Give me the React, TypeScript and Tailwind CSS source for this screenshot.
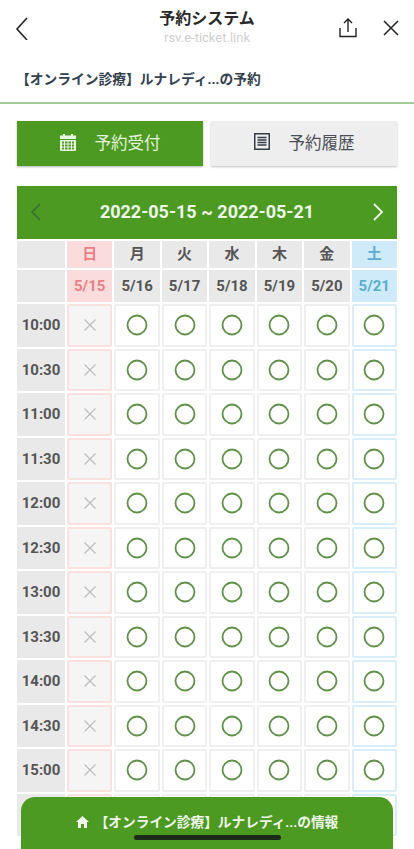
const FONT = "font-['Roboto','Noto_Sans_CJK_JP',sans-serif]";
const days = [
  { d: "日", n: "5/15", kind: "sun" },
  { d: "月", n: "5/16", kind: "" },
  { d: "火", n: "5/17", kind: "" },
  { d: "水", n: "5/18", kind: "" },
  { d: "木", n: "5/19", kind: "" },
  { d: "金", n: "5/20", kind: "" },
  { d: "土", n: "5/21", kind: "sat" },
];
const times = ["10:00","10:30","11:00","11:30","12:00","12:30","13:00","13:30","14:00","14:30","15:00","15:30"];

function Head({ text, kind, h, size }: { text: string; kind: string; h: string; size: string }) {
  const c = kind === "sun" ? "bg-[#fbdcdc] text-[#ea7f86]" : kind === "sat" ? "bg-[#cfeaf8] text-[#5aadd0]" : "bg-[#e9e9e9] text-[#555555]";
  return <div className={`flex items-center justify-center font-bold ${h} ${size} ${c}`}>{text}</div>;
}

function Cell({ kind }: { kind: string }) {
  if (kind === "sun") {
    return (
      <div className="flex h-[42.5px] items-center justify-center rounded-[2px] border-2 border-[#fbe0e0] bg-[#f5f5f5]">
        <svg width="14" height="14" viewBox="0 0 14 14" fill="none" stroke="#bcbcbc" strokeWidth="1.2"><path d="M1.500 1.500 12.500 12.500M12.500 1.500 1.500 12.500" /></svg>
      </div>
    );
  }
  const b = kind === "sat" ? "border-[#d9eef9]" : "border-[#efefef]";
  return (
    <div className={`flex h-[42.5px] items-center justify-center rounded-[2px] border-2 bg-white ${b}`}>
      <svg width="22" height="22" viewBox="0 0 22 22" fill="none" stroke="#5f9149" strokeWidth="1.800"><circle cx="11" cy="11" r="9.500" /></svg>
    </div>
  );
}

export default function App() {
  return (
    <div className={`relative h-[849px] w-[414px] overflow-hidden bg-white ${FONT}`}>
      <header className="relative flex h-[56px] items-start justify-between pl-[14px] pr-[15px] pt-[15px]">
        <svg width="16" height="24" viewBox="0 0 16 24" fill="none" stroke="#222" strokeWidth="1.6" className="mt-[1px]"><path d="M13 2 3 13l10 11" /></svg>
        <div className="absolute left-0 right-0 top-[9px] text-center leading-none">
          <div className="text-[16px] font-semibold leading-[20px] text-[#2a2a2a]">予約システム</div>
          <div className="mt-[2px] text-[13px] leading-[14px] text-[#cfcfcf]">rsv.e-ticket.link</div>
        </div>
        <div className="flex items-center gap-[26px] pt-[3px]">
          <svg width="18" height="20" viewBox="0 0 18 20" fill="none" stroke="#222" strokeWidth="1.4"><path d="M1 10v8.500h16V10M9 14V1.500M5 5l4-4 4 4" /></svg>
          <svg width="16" height="16" viewBox="0 0 16 16" fill="none" stroke="#222" strokeWidth="1.5"><path d="M1 1 15 15M15 1 1 15" /></svg>
        </div>
      </header>

      <div className="flex h-[48px] items-center border-b-2 border-[#a3cd96] pl-[16px] pt-[1px] text-[13.75px] font-bold text-[#33414f]">
        【オンライン診療】ルナレディ...の予約
      </div>

      <div className="mt-[17px] flex gap-[8px] px-[17px]">
        <div className="flex h-[45px] w-[186px] items-center justify-center gap-[19px] bg-[#4c9a22] text-[16.500px] text-[#e4f1dc] shadow-[0_1px_2px_rgba(0,0,0,0.3)]">
          <svg width="16" height="17" viewBox="0 0 16 17" fill="#e8f3e2" className="mb-[3px]"><path d="M0 1.500h16V5H0zM3 0h2v2H3zM11 0h2v2h-2z" /><path fillRule="evenodd" d="M0 6h16v10a1 1 0 0 1-1 1H1a1 1 0 0 1-1-1zm2 1.500v2h2v-2zm3 0v2h2.500v-2zm3.500 0v2H11v-2zm3.500 0v2h2v-2zM2 10.500v2h2v-2zm3 0v2h2.500v-2zm3.500 0v2H11v-2zm3.500 0v2h2v-2zM2 13.500v2h2v-2zm3 0v2h2.500v-2zm3.500 0v2H11v-2zm3.500 0v2h2v-2z" /></svg>
          <span className="pt-[2px]">予約受付</span>
        </div>
        <div className="flex h-[45px] w-[186px] items-center justify-center gap-[19px] bg-[#eeeeee] text-[16.500px] text-[#4a4f55] shadow-[0_1px_2px_rgba(0,0,0,0.25)]">
          <svg width="16" height="17" viewBox="0 0 16 17" fill="none" stroke="#343c47" className="mb-[4px]"><rect x="0.75" y="0.75" width="14.500" height="15.500" strokeWidth="1.5" /><path d="M3.500 4.500h9M3.500 7h9M3.500 9.500h9M3.500 12h9" strokeWidth="1.400" /></svg>
          <span className="pt-[2px]">予約履歴</span>
        </div>
      </div>

      <div className="mx-[17px] mt-[20px]">
        <div className="relative flex h-[53px] items-center justify-between pb-[2px] bg-[#4c9a22] pl-[13px] pr-[13px]">
          <svg width="12" height="18" viewBox="0 0 12 18" fill="none" stroke="#3d7435" strokeWidth="1.800"><path d="M10 1 2 9l8 8" /></svg>
          <span className="text-[18px] font-bold text-[#eef6e9]">2022-05-15 ~ 2022-05-21</span>
          <svg width="12" height="18" viewBox="0 0 12 18" fill="none" stroke="#f4f9f0" strokeWidth="1.800"><path d="M2 1l8 8-8 8" /></svg>
        </div>
        <div className="mt-[2px] grid grid-cols-[48px_repeat(7,1fr)] gap-x-[2px] gap-y-[2px]">
          <div className="h-[27px] bg-[#e9e9e9]" />
          {days.map((x) => <Head key={x.d} text={x.d} kind={x.kind} h="h-[27px]" size="text-[15px]" />)}
          <div className="h-[32px] bg-[#e9e9e9]" />
          {days.map((x) => <Head key={x.n} text={x.n} kind={x.kind} h="h-[32px]" size="text-[15px]" />)}
          {times.map((t) => (
            <div key={t} className="contents">
              <div className="flex h-[42.5px] items-center justify-center bg-[#e9e9e9] text-[15px] font-bold text-[#555555]">{t}</div>
              {days.map((x) => <Cell key={x.d} kind={x.kind} />)}
            </div>
          ))}
        </div>
      </div>

      <div className="absolute bottom-0 left-[21px] right-[21px] flex h-[52px] items-start justify-center gap-[6px] rounded-t-[14px] bg-[#4c9a22] pt-[16px] text-[13.7px] font-bold text-[#eef6e9]">
        <svg width="13" height="12" viewBox="0 0 13 12" fill="#f2f7ee" className="mt-[3px]"><path d="M6.500 0 13 6h-2v6H8V8H5v4H2V6H0z" /></svg>
        <span className="leading-[19px]">【オンライン診療】ルナレディ...の情報</span>
      </div>
      <div className="absolute bottom-[9px] left-[134px] h-[5px] w-[147px] rounded-full bg-[#1c2a18]" />
    </div>
  );
}
